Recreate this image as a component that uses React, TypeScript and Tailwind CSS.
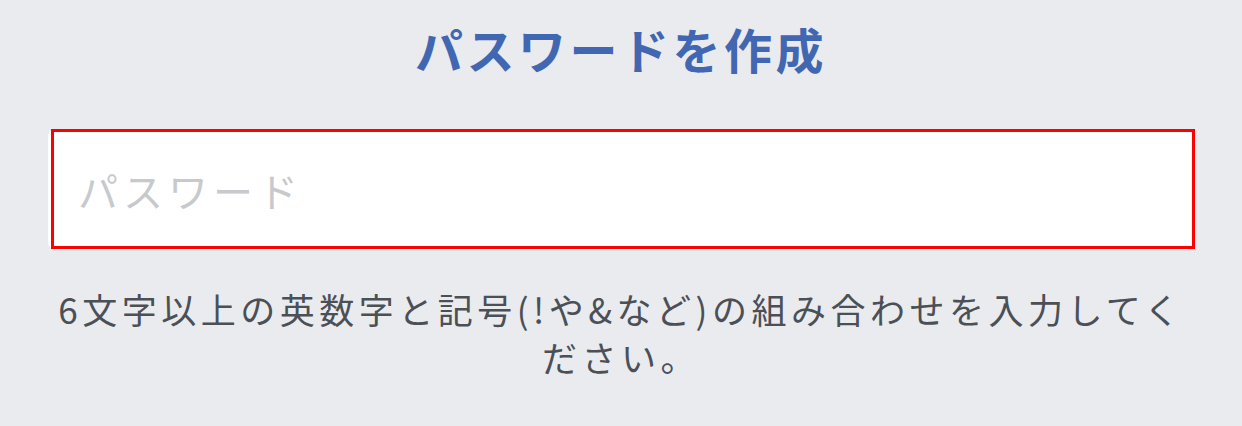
import React from "react";

const App = () => {
  return (
    <div
      className="w-[1242px] h-[426px] bg-[#e9ebee] overflow-hidden"
      style={{ fontFamily: '"Noto Sans CJK JP", "Noto Sans", sans-serif' }}
    >
      <h1 className="pt-[16px] text-center text-[48px] leading-[64px] font-bold tracking-[3.5px] text-[#4267b2]">
        パスワードを作成
      </h1>
      <div className="relative mt-[49px] mx-[48px]">
        <div className="h-[121px] mt-[3px] bg-white rounded-[8px] flex items-center pl-[30px]">
          <span className="text-[40px] text-[#c8c9cd] tracking-[5px]">パスワード</span>
        </div>
        <div className="absolute left-[3px] top-0 w-[1144px] h-[120px] border-[3px] border-[#ff0000]" />
      </div>
      <p className="mt-[35px] px-[56px] text-center text-[35px] leading-[48px] tracking-[4.5px] text-[#4b4f56]">
        6文字以上の英数字と記号(!や&など)の組み合わせを入力してください。
      </p>
    </div>
  );
};

export default App;
